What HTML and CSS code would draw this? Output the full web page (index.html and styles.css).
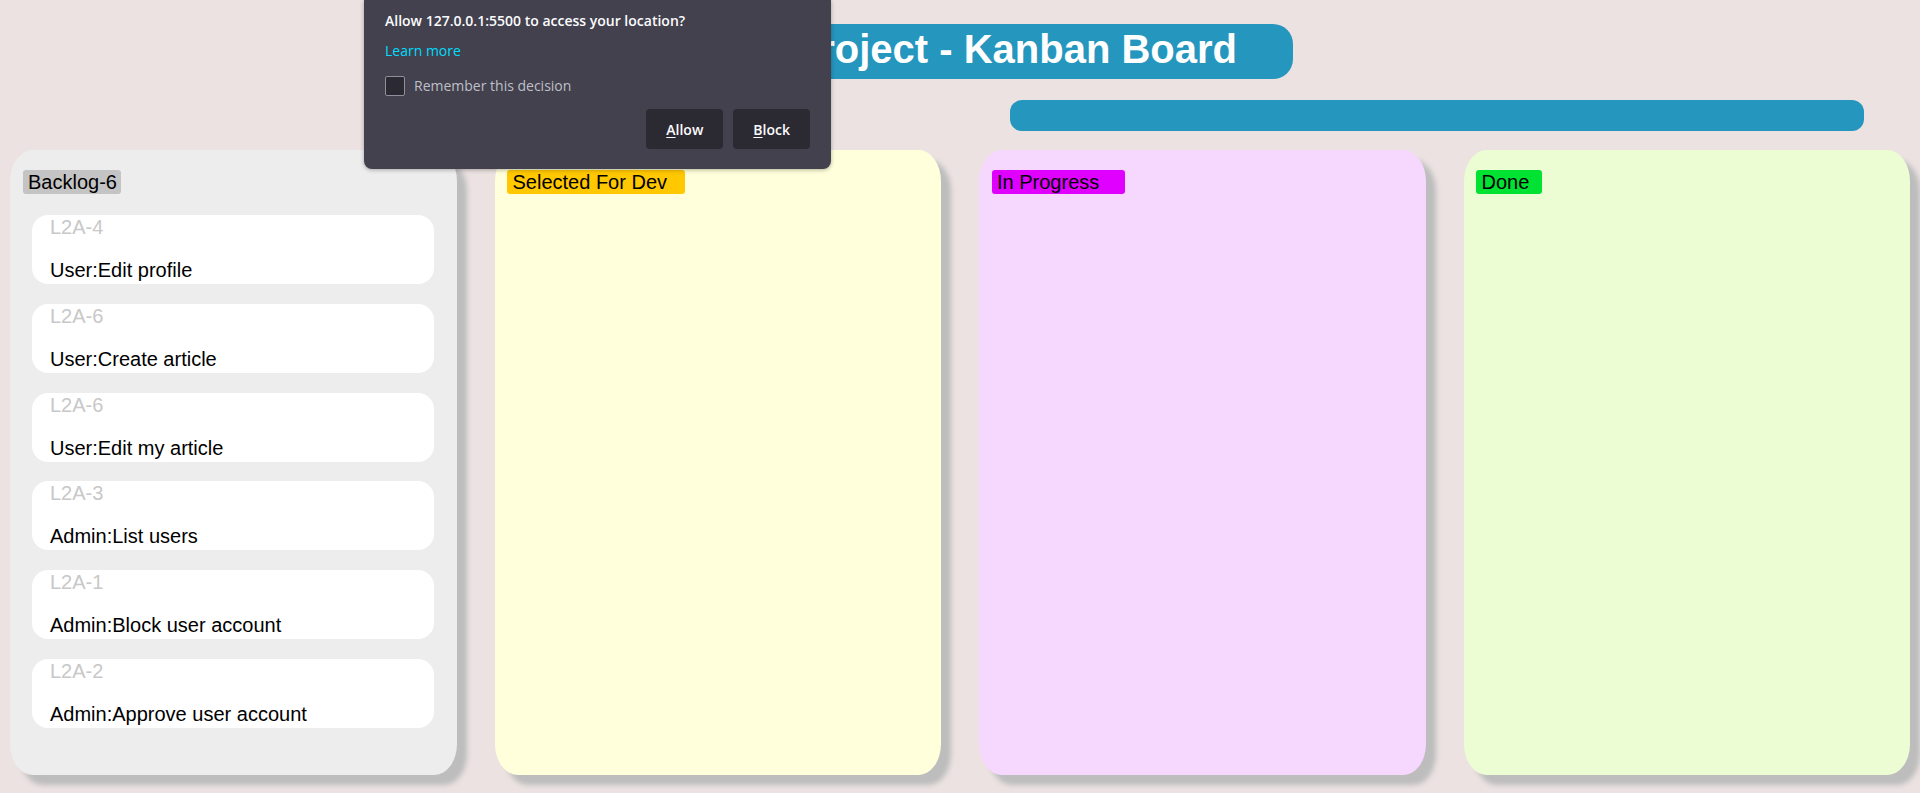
FILE: index.html
```html
<!DOCTYPE html>
<html lang="en">
<head>
<meta charset="utf-8">
<title>Kanban Board</title>
<link rel="stylesheet" href="styles.css">
</head>
<body>
<header class="header">
  <div class="title-row">
    <h1 class="title">Project - Kanban Board</h1>
  </div>
  <div class="bar-row">
    <div class="bar"></div>
  </div>
</header>

<main class="board">
  <section class="column column--backlog">
    <div class="col-head"><span class="label label--backlog">Backlog-6</span></div>
    <div class="cards">
      <div class="card"><div class="card-id">L2A-4</div><div class="card-title">User:Edit profile</div></div>
      <div class="card"><div class="card-id">L2A-6</div><div class="card-title">User:Create article</div></div>
      <div class="card"><div class="card-id">L2A-6</div><div class="card-title">User:Edit my article</div></div>
      <div class="card"><div class="card-id">L2A-3</div><div class="card-title">Admin:List users</div></div>
      <div class="card"><div class="card-id">L2A-1</div><div class="card-title">Admin:Block user account</div></div>
      <div class="card"><div class="card-id">L2A-2</div><div class="card-title">Admin:Approve user account</div></div>
    </div>
  </section>
  <section class="column column--selected">
    <div class="col-head"><span class="label label--selected">Selected For Dev</span></div>
    <div class="cards"></div>
  </section>
  <section class="column column--progress">
    <div class="col-head"><span class="label label--progress">In Progress</span></div>
    <div class="cards"></div>
  </section>
  <section class="column column--done">
    <div class="col-head"><span class="label label--done">Done</span></div>
    <div class="cards"></div>
  </section>
</main>

<div class="prompt">
  <div class="prompt-title">Allow 127.0.0.1:5500 to access your location?</div>
  <a class="prompt-link" href="#">Learn more</a>
  <label class="prompt-check"><span class="checkbox"></span><span>Remember this decision</span></label>
  <div class="prompt-actions">
    <button class="prompt-btn"><u>A</u>llow</button>
    <button class="prompt-btn"><u>B</u>lock</button>
  </div>
</div>
</body>
</html>
```

FILE: styles.css
```css
html, body {
  margin: 0;
  padding: 0;
}

body {
  background: #ebe2e1;
  font-family: "Liberation Sans", Arial, sans-serif;
  width: 1920px;
  height: 793px;
  overflow: hidden;
  position: relative;
}

.header {
  display: flex;
  flex-direction: column;
}

.title-row {
  display: flex;
  justify-content: flex-end;
  padding: 24px 627px 0 0;
}

.title {
  margin: 0;
  background: #2596be;
  color: #ffffff;
  font-size: 40px;
  font-weight: bold;
  line-height: 46px;
  padding: 2px 56px 7px 56px;
  border-radius: 20px;
}

.bar-row {
  display: flex;
  justify-content: flex-end;
  padding: 21px 56px 0 0;
}

.bar {
  width: 854px;
  height: 31px;
  background: #2596be;
  border-radius: 12px;
}

.board {
  display: grid;
  grid-template-columns: repeat(4, 1fr);
  gap: 38px;
  padding: 19px 10px 0 10px;
}

.column {
  height: 625px;
  box-sizing: border-box;
  padding-top: 20px;
  border-radius: 5%;
  box-shadow: 10px 10px 5px #bdbdbd;
}

.column--backlog { background: #ededed; }
.column--selected { background: #ffffdc; }
.column--progress { background: #f6d7fe; }
.column--done { background: #edfdd3; }

.col-head {
  padding: 0 12px;
  height: 24px;
}

.label {
  display: inline-block;
  vertical-align: top;
  font-size: 20px;
  line-height: 24px;
  color: #000;
  padding: 0 4px 0 5px;
  border-radius: 3px;
}

.label--backlog { background: #c4c4c4; margin-left: 1px; }
.label--selected { background: #ffc800; padding-left: 6px; padding-right: 18px; }
.label--progress { background: #df00ff; padding-left: 5px; padding-right: 26px; margin-left: 1px; }
.label--done { background: #02e232; padding-left: 6px; padding-right: 13px; }

.cards {
  display: flex;
  flex-direction: column;
  gap: 19.75px;
  margin: 21px 23px 0 22px;
}

.card {
  background: #ffffff;
  height: 69px;
  box-sizing: border-box;
  padding: 1px 18px 0 18px;
  border-radius: 16px;
  font-size: 20px;
  line-height: 23px;
}

.card-id {
  color: #c8c8c8;
}

.card-title {
  margin-top: 20px;
  color: #000;
}

/* Browser permission prompt overlay */
.prompt {
  position: absolute;
  top: 0;
  left: 364px;
  width: 467px;
  box-sizing: border-box;
  padding: 11px 21px 20px 21px;
  background: #42414d;
  border-radius: 0 0 8px 8px;
  box-shadow: 0 1px 4px rgba(0, 0, 0, 0.3);
  font-family: "Open Sans", "Noto Sans", sans-serif;
  font-size: 14px;
  line-height: 20px;
  color: #fbfbfe;
  display: flex;
  flex-direction: column;
  align-items: flex-start;
}

.prompt-title {
  font-weight: 600;
}

.prompt-link {
  margin-top: 10px;
  color: #00ddff;
  text-decoration: none;
}

.prompt-check {
  margin-top: 15px;
  display: flex;
  align-items: center;
  gap: 9px;
  color: #bfbfc9;
}

.checkbox {
  width: 18px;
  height: 18px;
  border: 1px solid #8f8f9d;
  border-radius: 2px;
  background: #2b2a33;
}

.prompt-actions {
  align-self: stretch;
  display: flex;
  justify-content: flex-end;
  gap: 10px;
  margin-top: 13px;
}

.prompt-btn {
  height: 40px;
  padding: 0 20px;
  border: none;
  border-radius: 4px;
  background: #2b2a33;
  color: #fbfbfe;
  font-family: "Open Sans", "Noto Sans", sans-serif;
  font-size: 14px;
  font-weight: 600;
}

.prompt-btn u {
  text-decoration-thickness: 1px;
  text-underline-offset: 2px;
}
```
